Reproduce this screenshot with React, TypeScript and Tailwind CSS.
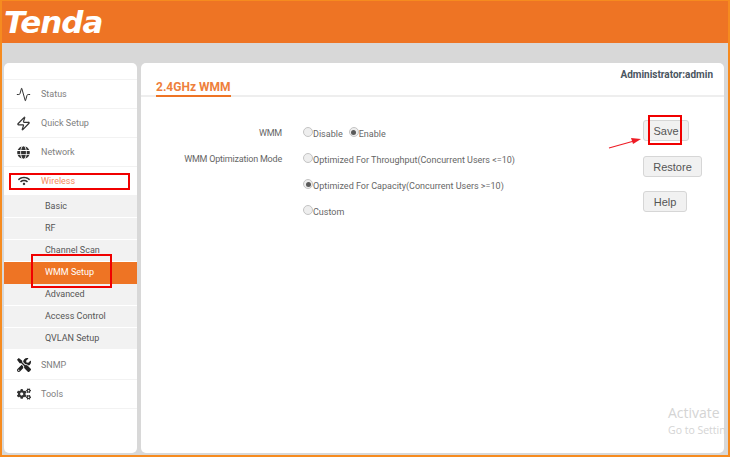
import { Activity, Zap } from "lucide-react";
import { FaCogs, FaGlobe, FaTools, FaWifi } from "react-icons/fa";

const font = "font-['Roboto',sans-serif]";

const SubItems = ["Basic", "RF", "Channel Scan", "WMM Setup", "Advanced", "Access Control", "QVLAN Setup"];

const MenuRow = ({ icon, label, active }: { icon: React.ReactNode; label: string; active?: boolean }) => (
  <div className="flex h-[29px] items-center border-b border-[#f2f2f2]">
    <div className="flex w-[37px] justify-center pl-[2px] text-[#333333]">{icon}</div>
    <span className={`pt-[2px] text-[9px] ${active ? "text-[#f58a5c]" : "text-[#808080]"}`}>{label}</span>
  </div>
);

const Radio = ({ checked, label }: { checked?: boolean; label: string }) => (
  <span className="flex items-start">
    <span className="flex h-[10px] w-[10px] items-center justify-center rounded-full border border-[#c4c4c4] bg-[#eeeeee]">
      {checked && <span className="h-[5px] w-[5px] rounded-full bg-[#5a5a5a]" />}
    </span>
    <span className="pt-[1px] text-[9px] leading-[13px] text-[#666666]">{label}</span>
  </span>
);

const Button = ({ label, width }: { label: string; width: string }) => (
  <button className={`${width} block h-[21px] rounded-[3px] border border-[#d6d6d6] bg-[#f1f1f1] pt-[1px] font-['Liberation_Sans',sans-serif] text-[11px] text-[#555555]`}>
    {label}
  </button>
);

export default function App() {
  return (
    <div className={`relative h-[457px] w-[730px] overflow-hidden border-x-2 border-b-2 border-t border-[#f68b1f] bg-[#d8d8d8] ${font}`}>
      <div className="flex h-[42px] items-center bg-[#ee7424] pl-[2px]">
        <span className="font-['DejaVu_Sans',sans-serif] text-[31px] font-bold italic leading-none tracking-[-1px] text-white">
          Tenda
        </span>
      </div>

      <div className="flex h-[410px] gap-[4px] pl-[2px] pr-[4px] pt-[20px]">
        <div className="h-[390px] w-[133px] rounded-[5px] bg-white pt-[16px]">
          <div className="border-t border-[#f2f2f2]">
            <MenuRow icon={<Activity size={15} strokeWidth={1.6} />} label="Status" />
            <MenuRow icon={<Zap size={15} strokeWidth={2} />} label="Quick Setup" />
            <MenuRow icon={<FaGlobe size={13} />} label="Network" />
            <MenuRow icon={<FaWifi size={12} />} label="Wireless" active />
            <div className="mb-[1px] bg-[#f2f2f2]">
              {SubItems.map(item => (
                <div
                  key={item}
                  className={`flex h-[22px] items-center border-b pl-[41px] pt-[1px] text-[9px] ${
                    item === "WMM Setup" ? "border-[#ee7424] bg-[#ee7424] text-white" : "border-white text-[#555555]"
                  }`}
                >
                  {item}
                </div>
              ))}
            </div>
            <MenuRow icon={<FaTools size={14} className="text-[#222222]" />} label="SNMP" />
            <MenuRow icon={<FaCogs size={14} />} label="Tools" />
          </div>
        </div>

        <div className="h-[390px] w-[583px] rounded-[5px] bg-white">
          <div className="relative h-[34px] border-b-2 border-[#eeeeee]">
            <span className="absolute right-[11px] top-[4px] text-[10px] font-bold text-[#4a5560]">Administrator:admin</span>
            <span className="absolute left-[15px] top-[17px] border-b-2 border-[#ee7424] text-[12px] font-bold leading-[15px] text-[#ee7f3c]">
              2.4GHz WMM
            </span>
          </div>

          <div className="flex pt-[25px]">
            <div className="flex w-[141px] flex-col items-end gap-[13px] pt-[5px] text-[9px] tracking-[-0.2px] text-[#666666]">
              <span className="leading-[13px]">WMM</span>
              <span className="leading-[13px]">WMM Optimization Mode</span>
            </div>
            <div className="flex w-[340px] flex-col gap-[13px] pl-[21px] pt-[5px]">
              <div className="flex h-[13px] gap-[6px]">
                <Radio label="Disable" />
                <Radio checked label="Enable" />
              </div>
              <div className="h-[13px]"><Radio label="Optimized For Throughput(Concurrent Users <=10)" /></div>
              <div className="h-[13px]"><Radio checked label="Optimized For Capacity(Concurrent Users >=10)" /></div>
              <div className="h-[13px]"><Radio label="Custom" /></div>
            </div>
            <div className="-mt-[2px] flex flex-col items-start gap-[15px] pl-[21px]">
              <Button label="Save" width="w-[46px]" />
              <Button label="Restore" width="w-[59px]" />
              <div className="-mt-[1px]"><Button label="Help" width="w-[44px]" /></div>
            </div>
          </div>
        </div>
      </div>

      {/* annotations drawn over the screenshot */}
      <div className="absolute left-[7px] top-[172px] h-[17px] w-[121px] border-2 border-[#f00000]" />
      <div className="absolute left-[29px] top-[253px] h-[34px] w-[81px] border-2 border-[#f00000]" />
      <div className="absolute left-[646px] top-[114px] h-[30px] w-[34px] border-2 border-[#f00000]" />
      <svg className="absolute left-[606px] top-[135px]" width="36" height="14" viewBox="0 0 36 14">
        <path d="M1 12 L26 5" stroke="#ee1c25" strokeWidth="1.2" />
        <path d="M33 3 L23 2 L25 8 Z" fill="#ee1c25" />
      </svg>

      <div className="absolute left-[666px] top-[403px] font-['Open_Sans',sans-serif] text-[#d4d4d4]">
        <div className="whitespace-nowrap text-[14px] leading-[18px]">Activate</div>
        <div className="whitespace-nowrap text-[10.5px] leading-[16px]">Go to Settin</div>
      </div>
    </div>
  );
}
